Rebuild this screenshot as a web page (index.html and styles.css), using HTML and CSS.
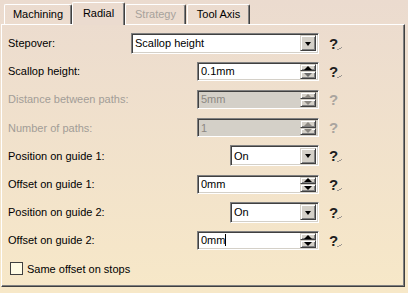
FILE: index.html
```html
<!DOCTYPE html>
<html lang="en">
<head>
  <meta charset="UTF-8" />
  <title>Radial</title>
  <link rel="stylesheet" href="styles.css">
</head>
<body>
  <div class="tabs">
    <div class="tab tab-machining">Machining</div>
    <div class="tab active">Radial</div>
    <div class="tab disabled">Strategy</div>
    <div class="tab tab-axis">Tool Axis</div>
  </div>

  <div class="panel">
    <div class="row">
      <span class="lbl">Stepover:</span>
      <div class="combo wide"><span class="val">Scallop height</span><span class="drop"></span></div>
      <span class="help">?<svg width="9" height="6"><path d="M0 5.5h1M2 4.5h1M4 3.5h1M6 2.5h1M8 1.5h1M1 5.5h1M3 4.5h1" stroke="#9a9590" /></svg></span>
    </div>
    <div class="row">
      <span class="lbl">Scallop height:</span>
      <div class="spin"><span class="val">0.1mm</span><span class="arrows"><span class="up"></span><span class="down hollow"></span></span></div>
      <span class="help">?<svg width="9" height="6"><path d="M0 5.5h1M2 4.5h1M4 3.5h1M6 2.5h1M8 1.5h1M1 5.5h1M3 4.5h1" stroke="#9a9590" /></svg></span>
    </div>
    <div class="row off">
      <span class="lbl">Distance between paths:</span>
      <div class="spin"><span class="val">5mm</span><span class="arrows"><span class="up"></span><span class="down"></span></span></div>
      <span class="help">?</span>
    </div>
    <div class="row off">
      <span class="lbl">Number of paths:</span>
      <div class="spin"><span class="val">1</span><span class="arrows"><span class="up"></span><span class="down"></span></span></div>
      <span class="help">?</span>
    </div>
    <div class="row">
      <span class="lbl">Position on guide 1:</span>
      <div class="combo short"><span class="val">On</span><span class="drop"></span></div>
      <span class="help">?<svg width="9" height="6"><path d="M0 5.5h1M2 4.5h1M4 3.5h1M6 2.5h1M8 1.5h1M1 5.5h1M3 4.5h1" stroke="#9a9590" /></svg></span>
    </div>
    <div class="row">
      <span class="lbl">Offset on guide 1:</span>
      <div class="spin"><span class="val">0mm</span><span class="arrows"><span class="up"></span><span class="down"></span></span></div>
      <span class="help">?<svg width="9" height="6"><path d="M0 5.5h1M2 4.5h1M4 3.5h1M6 2.5h1M8 1.5h1M1 5.5h1M3 4.5h1" stroke="#9a9590" /></svg></span>
    </div>
    <div class="row">
      <span class="lbl">Position on guide 2:</span>
      <div class="combo short"><span class="val">On</span><span class="drop"></span></div>
      <span class="help">?<svg width="9" height="6"><path d="M0 5.5h1M2 4.5h1M4 3.5h1M6 2.5h1M8 1.5h1M1 5.5h1M3 4.5h1" stroke="#9a9590" /></svg></span>
    </div>
    <div class="row">
      <span class="lbl">Offset on guide 2:</span>
      <div class="spin"><span class="val">0mm<span class="caret"></span></span><span class="arrows"><span class="up"></span><span class="down"></span></span></div>
      <span class="help">?<svg width="9" height="6"><path d="M0 5.5h1M2 4.5h1M4 3.5h1M6 2.5h1M8 1.5h1M1 5.5h1M3 4.5h1" stroke="#9a9590" /></svg></span>
    </div>
    <div class="row check-row">
      <span class="box"></span>
      <span>Same offset on stops</span>
    </div>
  </div>
</body>
</html>
```

FILE: styles.css
```css
html, body {
  margin: 0;
  height: 100%;
  font-family: "Liberation Sans", Arial, sans-serif;
  font-size: 11px;
  color: #000000;
  background: linear-gradient(#ebdbcf, #f7e8c8);
}
.tabs {
  display: flex;
  align-items: flex-end;
  height: 24px;
  padding-left: 4px;
}
.tab {
  box-sizing: border-box;
  height: 20px;
  line-height: 19px;
  text-align: center;
  border-top: 1px solid #ffffff;
  border-left: 1px solid #ffffff;
  border-right: 1px solid #404040;
  border-radius: 2px 2px 0 0;
  box-shadow: inset -1px 0 #808080;
}
.tab-machining { width: 68px; }
.tab.active {
  width: 53px;
  height: 23px;
  line-height: 20px;
  margin-bottom: -1px;
  position: relative;
  z-index: 1;
  background: #ebdbcf;
}
.tab.disabled { width: 61px; color: #a7a29c; }
.tab-axis { width: 63px; margin-left: 1px; }
.panel {
  box-sizing: border-box;
  height: 263px;
  margin: 0 3px 0 1px;
  padding-top: 4px;
  border: 1px solid;
  border-color: #ffffff #404040 #404040 #ffffff;
  box-shadow: inset -1px -1px #808080;
}
.row {
  display: flex;
  align-items: center;
  height: 28.2px;
  padding: 0 61px 0 6px;
}
.lbl { flex: 1; }
.off .lbl { color: #a29d97; }
.off .help { color: #aaa59f; }
.combo, .spin {
  box-sizing: border-box;
  display: flex;
  align-items: center;
  background: #ffffff;
  border: 1px solid;
  border-color: #808080 #ffffff #ffffff #808080;
  box-shadow: inset 1px 1px #404040, inset -1px -1px #d4d0c8;
  padding: 2px;
}
.combo { height: 21px; }
.combo.wide { width: 188px; }
.combo.short { width: 89px; }
.spin { width: 122px; height: 19px; }
.val { flex: 1; padding-left: 1px; white-space: nowrap; }
.off .spin { background: #d4d0c8; color: #8c8882; }
.caret {
  display: inline-block;
  width: 1px;
  height: 12px;
  background: #000;
  vertical-align: -2px;
}
.drop, .arrows span {
  box-sizing: border-box;
  display: flex;
  align-items: center;
  justify-content: center;
  background: #d4d0c8;
  border: 1px solid;
  border-color: #d4d0c8 #404040 #404040 #d4d0c8;
  box-shadow: inset 1px 1px #ffffff, inset -1px -1px #808080;
}
.drop { width: 16px; height: 16px; }
.drop::after {
  content: "";
  border-left: 3.5px solid transparent;
  border-right: 3.5px solid transparent;
  border-top: 4px solid #000;
  margin-top: 1px;
}
.arrows { display: flex; flex-direction: column; }
.arrows span { width: 16px; height: 7.5px; }
.arrows .up::after {
  content: "";
  border-left: 4px solid transparent;
  border-right: 4px solid transparent;
  border-bottom: 4px solid #000;
}
.arrows .down::after {
  content: "";
  border-left: 4px solid transparent;
  border-right: 4px solid transparent;
  border-top: 4px solid #000;
}
.arrows .hollow::after { border-top-color: #6c6c6c; }
.off .arrows .up::after { border-bottom-color: #8c8882; }
.off .arrows .down::after { border-top-color: #8c8882; }
.help {
  display: flex;
  align-items: flex-end;
  width: 14px;
  margin-left: 10px;
  font-weight: bold;
  font-size: 15px;
  line-height: 15px;
  color: #1e1e1e;
}
.help svg { margin-left: -1px; margin-bottom: 1px; }
.check-row { padding-left: 8px; }
.box {
  box-sizing: border-box;
  width: 13px;
  height: 13px;
  margin-right: 4px;
  background: #fffbe4;
  border: 1px solid #404040;
}
```
